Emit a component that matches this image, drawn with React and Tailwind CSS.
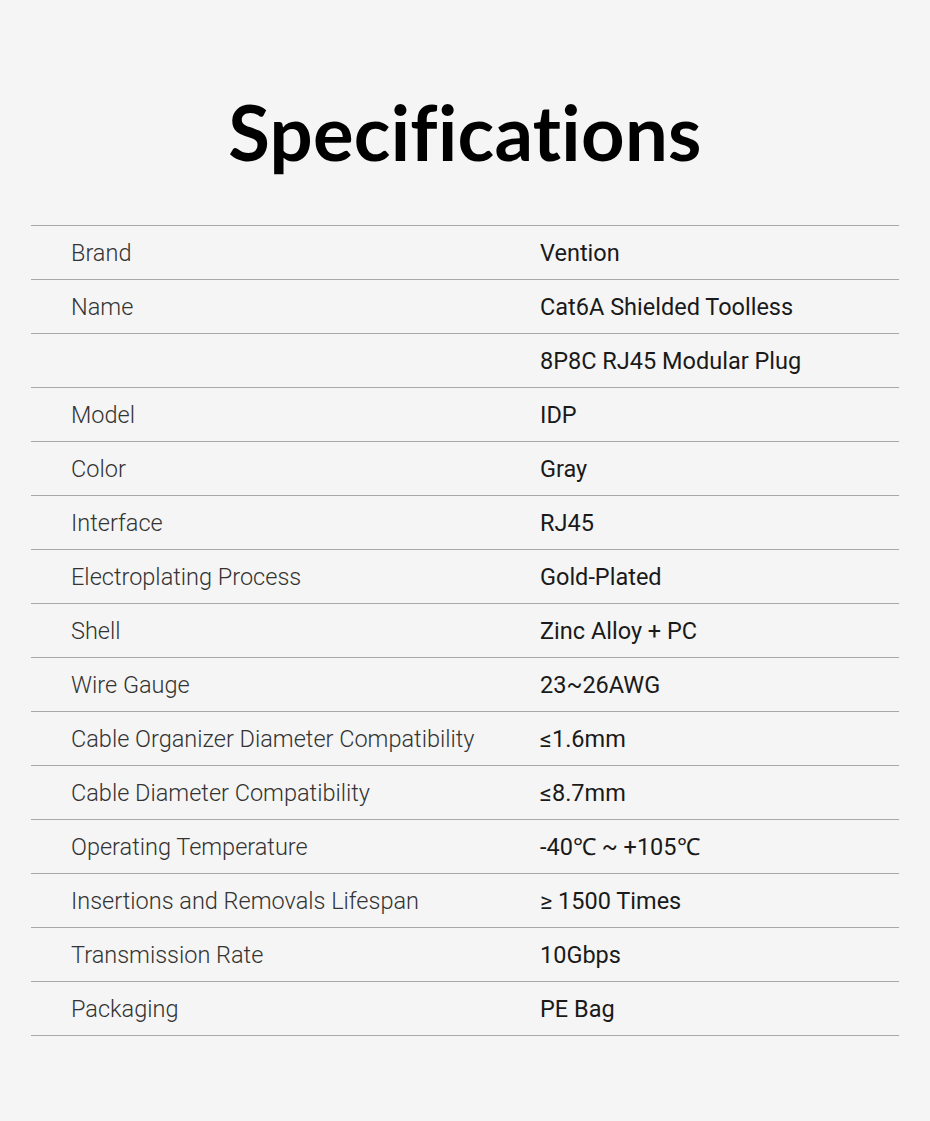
import React from "react";

const specs = [
  ["Brand", "Vention"],
  ["Name", "Cat6A Shielded Toolless"],
  ["", "8P8C RJ45 Modular Plug"],
  ["Model", "IDP"],
  ["Color", "Gray"],
  ["Interface", "RJ45"],
  ["Electroplating Process", "Gold-Plated"],
  ["Shell", "Zinc Alloy + PC"],
  ["Wire Gauge", "23~26AWG"],
  ["Cable Organizer Diameter Compatibility", "≤1.6mm"],
  ["Cable Diameter Compatibility", "≤8.7mm"],
  ["Operating Temperature", "-40℃ ~ +105℃"],
  ["Insertions and Removals Lifespan", "≥ 1500 Times"],
  ["Transmission Rate", "10Gbps"],
  ["Packaging", "PE Bag"],
];

const App = () => {
  return (
    <div className="w-[930px] h-[1121px] bg-[#f5f5f5] flex flex-col items-center font-['Roboto',sans-serif]">
      <h1 className="mt-[86px] h-[92px] flex items-center text-[76px] font-bold text-black tracking-[0.3px] font-['Lato',sans-serif]">
        Specifications
      </h1>
      <div className="mt-[47px] w-[868px] border-t border-[#a8a8a8]">
        {specs.map(([label, value], i) => (
          <div
            key={i}
            className="h-[54px] pt-[3px] flex items-center border-b border-[#a8a8a8] text-[23.5px]"
          >
            <div className="w-[509px] pl-[40px] text-[#333] font-light">{label}</div>
            <div className="text-[#1a1a1a] font-normal">{value}</div>
          </div>
        ))}
      </div>
    </div>
  );
};

export default App;
